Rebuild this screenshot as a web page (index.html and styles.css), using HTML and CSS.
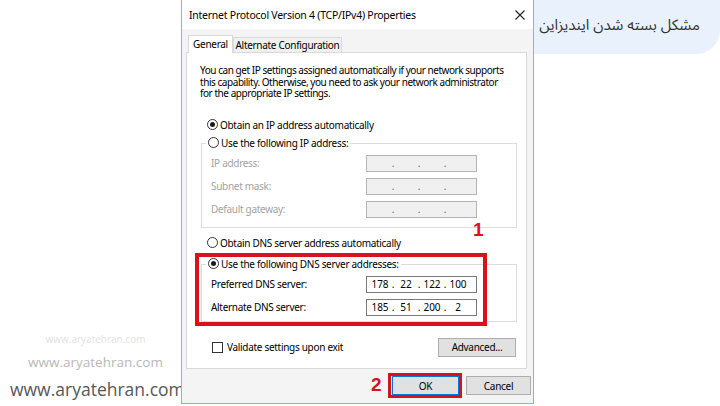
FILE: index.html
```html
<!DOCTYPE html>
<html lang="en">
<head>
    <meta charset="UTF-8">
    <title>Internet Protocol Version 4 (TCP/IPv4) Properties</title>
    <link rel="stylesheet" href="styles.css">
</head>
<body>
<div class="page">
    <div class="marks">
        <div class="mark mark-faint">www.aryatehran.com</div>
        <div class="mark mark-light">www.aryatehran.com</div>
        <div class="mark mark-dark">www.aryatehran.com</div>
    </div>

    <div class="dialog">
        <div class="titlebar">
            <span class="title">Internet Protocol Version 4 (TCP/IPv4) Properties</span>
            <svg class="close" width="10" height="10" viewBox="0 0 10 10">
                <path d="M0.5 0.5 L9.5 9.5 M9.5 0.5 L0.5 9.5" stroke="#222" stroke-width="1.1" fill="none"/>
            </svg>
        </div>

        <div class="tabs">
            <div class="tab active">General</div>
            <div class="tab">Alternate Configuration</div>
        </div>

        <div class="panel">
            <p class="intro">You can get IP settings assigned automatically if your network supports<br>this capability. Otherwise, you need to ask your network administrator<br>for the appropriate IP settings.</p>

            <div class="radio-row ip-auto"><span class="radio checked"></span>Obtain an IP address automatically</div>

            <div class="group ip-group">
                <div class="group-head"><span class="radio"></span>Use the following IP address:</div>
                <div class="field disabled">
                    <span>IP address:</span>
                    <div class="ipbox"><span></span><i>.</i><span></span><i>.</i><span></span><i>.</i><span></span></div>
                </div>
                <div class="field disabled">
                    <span>Subnet mask:</span>
                    <div class="ipbox"><span></span><i>.</i><span></span><i>.</i><span></span><i>.</i><span></span></div>
                </div>
                <div class="field disabled">
                    <span>Default gateway:</span>
                    <div class="ipbox"><span></span><i>.</i><span></span><i>.</i><span></span><i>.</i><span></span></div>
                </div>
            </div>

            <div class="radio-row dns-auto"><span class="radio"></span>Obtain DNS server address automatically</div>

            <div class="group dns-group">
                <div class="group-head"><span class="radio checked"></span>Use the following DNS server addresses:</div>
                <div class="field">
                    <span>Preferred DNS server:</span>
                    <div class="ipbox"><span>178</span><i>.</i><span>22</span><i>.</i><span>122</span><i>.</i><span>100</span></div>
                </div>
                <div class="field">
                    <span>Alternate DNS server:</span>
                    <div class="ipbox"><span>185</span><i>.</i><span>51</span><i>.</i><span>200</span><i>.</i><span>2</span></div>
                </div>
            </div>

            <div class="options">
                <div class="check-row"><span class="check"></span>Validate settings upon exit</div>
                <button class="btn btn-adv">Advanced...</button>
            </div>
        </div>

        <div class="buttons">
            <button class="btn btn-ok">OK</button>
            <button class="btn btn-cancel">Cancel</button>
        </div>

        <!-- red annotations drawn over the dialog -->
        <div class="anno anno-dns"></div>
        <div class="anno anno-ok"></div>
        <div class="num num-1">1</div>
        <div class="num num-2">2</div>
    </div>

    <div class="caption">مشکل بسته شدن ایندیزاین</div>
</div>
</body>
</html>
```

FILE: styles.css
```css
body {
    margin: 0;
    background: #fff;
    font-family: "Noto Sans", "DejaVu Sans", sans-serif;
}

.page {
    display: flex;
    width: 720px;
    height: 406px;
    overflow: hidden;
}

/* watermarks on the left */
.marks {
    width: 181px;
    flex: none;
    overflow: hidden;
    display: flex;
    flex-direction: column;
    justify-content: flex-end;
    align-items: center;
    padding: 0 0 5px 10px;
    box-sizing: border-box;
    font-family: "Open Sans", "Noto Sans", sans-serif;
    white-space: nowrap;
}

.mark-faint {
    font-size: 10px;
    line-height: 14px;
    color: #e2e2e2;
}

.mark-light {
    font-size: 13.5px;
    line-height: 16px;
    margin-top: 8px;
    color: #b8b8b8;
}

.mark-dark {
    align-self: flex-start;
    margin-top: 7px;
    font-size: 17.5px;
    line-height: 24px;
    color: #575757;
}

/* dialog */
.dialog {
    position: relative;
    width: 353px;
    height: 404px;
    flex: none;
    box-sizing: border-box;
    border: 1px solid #86b3e0;
    border-top: none;
    background: #f4f4f4;
    font-size: 10px;
    letter-spacing: -0.3px;
    color: #000;
}

.titlebar {
    height: 29px;
    background: #fff;
    display: flex;
    align-items: center;
    justify-content: space-between;
    padding: 0 8px 0 7px;
    font-size: 10.5px;
    letter-spacing: -0.25px;
}

.tabs {
    display: flex;
    align-items: flex-end;
    height: 23px;
    padding-left: 6px;
}

.tab {
    width: 109px;
    height: 15px;
    line-height: 14px;
    box-sizing: border-box;
    border: 1px solid #d9d9d9;
    border-bottom: none;
    background: #f0f0f0;
    text-align: center;
    white-space: nowrap;
}

.tab.active {
    width: 45px;
    height: 18px;
    line-height: 16px;
    margin-bottom: -1px;
    background: #fff;
    position: relative;
    z-index: 1;
}

.panel {
    height: 317px;
    margin: 0 6px 0 4px;
    box-sizing: border-box;
    border: 1px solid #d9d9d9;
    background: #fff;
    padding: 0 9px 0 13px;
}

.intro {
    margin: 12px 0 0;
    line-height: 11.6px;
    letter-spacing: -0.45px;
    white-space: nowrap;
}

.radio-row,
.group-head,
.check-row {
    display: flex;
    align-items: center;
    height: 14px;
    gap: 2px;
    white-space: nowrap;
}

.radio-row {
    margin-left: 7px;
}

.ip-auto {
    margin-top: 18px;
}

.dns-auto {
    margin-top: 8px;
}

.radio {
    width: 11px;
    height: 11px;
    flex: none;
    box-sizing: border-box;
    border: 1px solid #333;
    border-radius: 50%;
    background: #fff;
    display: flex;
    align-items: center;
    justify-content: center;
}

.radio.checked::after {
    content: "";
    width: 5px;
    height: 5px;
    border-radius: 50%;
    background: #1a1a1a;
}

.group {
    margin-left: 1px;
    border: 1px solid #dcdcdc;
    padding: 0 39px 9px 0;
}

.ip-group {
    margin-top: 11px;
}

.dns-group {
    margin-top: 14px;
    padding-bottom: 5px;
}

.group-head {
    width: fit-content;
    margin: -8px 0 -1px 4px;
    padding: 0 2px;
    background: #fff;
}

.field {
    display: flex;
    align-items: center;
    justify-content: space-between;
    height: 17px;
    margin-top: 6px;
    padding-left: 9px;
}

.field.disabled > span {
    color: #a3a3a3;
}

.ipbox {
    width: 111px;
    height: 17px;
    box-sizing: border-box;
    border: 1px solid #7a7a7a;
    background: #fff;
    display: flex;
    align-items: center;
    padding-left: 3px;
    letter-spacing: 0;
}

.field.disabled .ipbox {
    border-color: #b4b4b4;
    background: #f0f0f0;
    color: #6d6d6d;
}

.ipbox span {
    width: 20px;
    text-align: center;
}

.ipbox i {
    width: 6px;
    font-style: normal;
    text-align: center;
}

.options {
    display: flex;
    align-items: center;
    justify-content: space-between;
    margin: 16px 1px 0 0;
}

.check-row {
    margin-left: 12px;
    gap: 4px;
}

.check {
    width: 11px;
    height: 11px;
    box-sizing: border-box;
    border: 1px solid #333;
    background: #fff;
}

.btn {
    height: 19px;
    padding: 0;
    box-sizing: border-box;
    border: 1px solid #adadad;
    background: #e1e1e1;
    font: inherit;
    letter-spacing: inherit;
    color: #000;
}

.btn-adv {
    width: 78px;
}

.buttons {
    display: flex;
    justify-content: flex-end;
    gap: 7px;
    margin-top: 7px;
    padding-right: 2px;
}

.btn-ok {
    width: 67px;
    border-color: #0078d7;
}

.btn-cancel {
    width: 65px;
}

/* annotations */
.anno {
    position: absolute;
    box-sizing: border-box;
    border: 4px solid #d8121d;
}

.anno-dns {
    left: 13px;
    top: 253px;
    width: 292px;
    height: 73px;
}

.anno-ok {
    left: 206px;
    top: 373px;
    width: 74px;
    height: 25px;
    border-width: 3px;
}

.num {
    position: absolute;
    color: #d8121d;
    font: bold 19px/19px "Liberation Sans", Arial, sans-serif;
    letter-spacing: 0;
}

.num-1 {
    left: 291px;
    top: 220px;
}

.num-2 {
    left: 189px;
    top: 375px;
}

/* persian caption */
.caption {
    flex: 1;
    height: 54px;
    box-sizing: border-box;
    background: #e9f2fc;
    border-bottom-right-radius: 24px;
    direction: rtl;
    display: flex;
    align-items: center;
    padding: 0 20px 4px 0;
    font: 15px "Noto Sans Arabic", "DejaVu Sans", sans-serif;
    color: #333;
}
```
